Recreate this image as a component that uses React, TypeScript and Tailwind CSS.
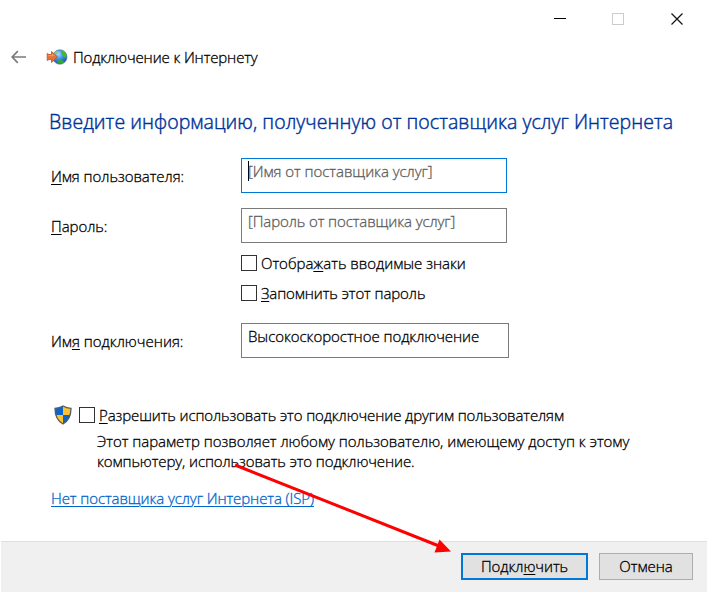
import type { ReactNode } from "react";

function Key({ children }: { children: ReactNode }) {
  return <span className="underline decoration-1 underline-offset-2">{children}</span>;
}

function CheckBox() {
  return <span className="size-4 shrink-0 border border-[#333333] bg-white" />;
}

function BackArrow() {
  return (
    <svg className="mb-0.5" width="16" height="14" viewBox="0 0 16 14" fill="none" stroke="#7b7b7b" strokeWidth="1.7">
      <path d="M15 7H1.2M6.8 1.2L1.2 7l5.6 5.8" />
    </svg>
  );
}

function GlobeIcon() {
  return (
    <svg className="mb-0.5" width="22" height="16" viewBox="0 0 22 16">
      <defs>
        <radialGradient id="sea" cx="0.4" cy="0.3" r="0.75">
          <stop offset="0" stopColor="#a5dcff" />
          <stop offset="0.45" stopColor="#3c92ea" />
          <stop offset="1" stopColor="#124aa0" />
        </radialGradient>
      </defs>
      <circle cx="13.8" cy="8" r="7.2" fill="url(#sea)" stroke="#5b7894" strokeWidth="0.7" />
      <path d="M16 1.400c2.500.6 3.900 2 4.600 4.300l-.9 3-1.800-.5-.8-2.200-1.800-.8-.2-2z" fill="#45b735" />
      <path d="M13 10.800l3 .5 2 1.300-1.500 2-3 .2-2-1.700z" fill="#2daf27" />
      <path d="M8 4l2.500-2.200 1.500.7-1.200 2.300L8.500 6z" fill="#8acb72" />
      <path d="M1.200 4.500l1.800 1h2.500V2.500L11.500 8l-6 5.500v-3H3l-1.800 1z" fill="#e6703a" stroke="#b85428" strokeWidth="0.8" />
      <path d="M2.500 6.700h4V5.200l2 2" fill="none" stroke="#f7aa78" strokeWidth="0.8" />
    </svg>
  );
}

function ShieldIcon() {
  return (
    <svg width="18" height="20" viewBox="0 0 18 20">
      <defs>
        <clipPath id="shield">
          <path d="M9 1Q5.500 3.200 1 3.300C1 10.500 2.500 15.500 9 19c6.500-3.500 8-8.500 8-15.700Q12.500 3.200 9 1z" />
        </clipPath>
      </defs>
      <g clipPath="url(#shield)">
        <path d="M0 0h9v10H0zM9 10h9v10H9z" fill="#0c65c8" />
        <path d="M9 0h9v10H9zM0 10h9v10H0z" fill="#ffc131" />
      </g>
      <path d="M9 1Q5.500 3.200 1 3.300C1 10.500 2.500 15.500 9 19c6.500-3.500 8-8.500 8-15.700Q12.500 3.200 9 1z" fill="none" stroke="#555c63" strokeWidth="1.300" />
    </svg>
  );
}

function TitleBar() {
  return (
    <div className="flex h-[38px] items-center justify-end pr-6">
      <svg width="130" height="14" viewBox="0 0 130 14" fill="none" shapeRendering="crispEdges">
        <path d="M0 6.500h12" stroke="#000" />
        <rect x="58.500" y="1.500" width="11" height="11" stroke="#cccccc" />
        <path d="M117.500 1.500l11 11M128.500 1.500l-11 11" stroke="#111" strokeWidth="1.200" shapeRendering="auto" />
      </svg>
    </div>
  );
}

export default function App() {
  return (
    <div className="relative flex h-[593px] w-[708px] flex-col overflow-hidden bg-white font-['Open_Sans','Noto_Sans',sans-serif] text-[15px] leading-5 font-light tracking-[-0.05px] whitespace-nowrap text-black [-webkit-text-stroke:0.3px]">
      <TitleBar />
      <header className="flex h-10 items-center pl-[11px]">
        <BackArrow />
        <span className="ml-[19px]"><GlobeIcon /></span>
        <h1 className="mb-0.5 ml-[5px] font-light tracking-[-0.13px]">Подключение к Интернету</h1>
      </header>
      <h2 className="mt-[30px] ml-[49px] h-7 text-[19.500px] leading-7 font-light tracking-[0.06px] text-[#003399] [-webkit-text-stroke:0.45px]">
        Введите информацию, полученную от поставщика услуг Интернета
      </h2>

      <div className="mt-[22px] ml-[51px] flex h-[35px]">
        <label className="w-[190px] pt-2"><Key>И</Key>мя пользователя:</label>
        <div className="flex w-[266px] border border-[#0078d7] pt-0.5 pl-1.5 text-[#5c5c5c]">
          <span className="-mr-px h-5 w-px bg-black" />
          <span>[Имя от поставщика услуг]</span>
        </div>
      </div>
      <div className="mt-[15px] ml-[51px] flex h-[35px]">
        <label className="w-[190px] pt-2"><Key>П</Key>ароль:</label>
        <div className="w-[266px] border border-[#7a7a7a] pt-0.5 pl-1.5 tracking-[-0.1px] text-[#5c5c5c]">[Пароль от поставщика услуг]</div>
      </div>
      <div className="mt-[10px] ml-[241px] flex h-5 items-center gap-1">
        <CheckBox />
        <span className="tracking-[-0.02px]">Отобра<Key>ж</Key>ать вводимые знаки</span>
      </div>
      <div className="mt-[10px] ml-[241px] flex h-5 items-center gap-1">
        <CheckBox />
        <span className="tracking-[-0.1px]"><Key>З</Key>апомнить этот пароль</span>
      </div>
      <div className="mt-5 ml-[51px] flex h-[35px]">
        <label className="w-[190px] pt-2 tracking-normal">Им<Key>я</Key> подключения:</label>
        <div className="w-[268px] border border-[#7a7a7a] pt-0.5 pl-1.5">Высокоскоростное подключение</div>
      </div>

      <div className="mt-[47px] ml-[54px] flex h-5 items-center">
        <ShieldIcon />
        <span className="ml-[7px] flex items-center gap-1">
          <CheckBox />
          <span className="tracking-[-0.11px]"><Key>Р</Key>азрешить использовать это подключение другим пользователям</span>
        </span>
      </div>
      <p className="mt-1.5 ml-[97px]">
        <span className="block tracking-[-0.02px]">Этот параметр позволяет любому пользователю, имеющему доступ к этому</span>
        <span className="block tracking-[-0.1px]">компьютеру, использовать это подключение.</span>
      </p>
      <a className="mt-[17px] ml-[51px] self-start tracking-[-0.09px] text-[#0066cc] underline decoration-1 underline-offset-2">
        Нет поставщика услуг Интернета (ISP)
      </a>

      <footer className="mx-px mt-auto mb-px flex h-[51px] justify-end gap-[11px] border-t border-[#dfdfdf] bg-[#f0f0f0] pt-[11px] pr-[14px]">
        <button className="flex h-[27px] w-[127px] items-center justify-center border-2 border-[#0078d7] bg-[#e1e1e1] pb-0.5">
          <span>Подкл<Key>ю</Key>чить</span>
        </button>
        <button className="flex h-[27px] w-[94px] items-center justify-center border border-[#adadad] bg-[#e1e1e1] pb-0.5">Отмена</button>
      </footer>

      <svg className="absolute top-[460px] left-[230px]" width="225" height="100" viewBox="0 0 225 100">
        <path d="M5 5L209 86" stroke="#ff0000" strokeWidth="3" />
        <path d="M221 91.500L209.500 79.500L204.500 92.500z" fill="#ff0000" />
      </svg>
    </div>
  );
}
